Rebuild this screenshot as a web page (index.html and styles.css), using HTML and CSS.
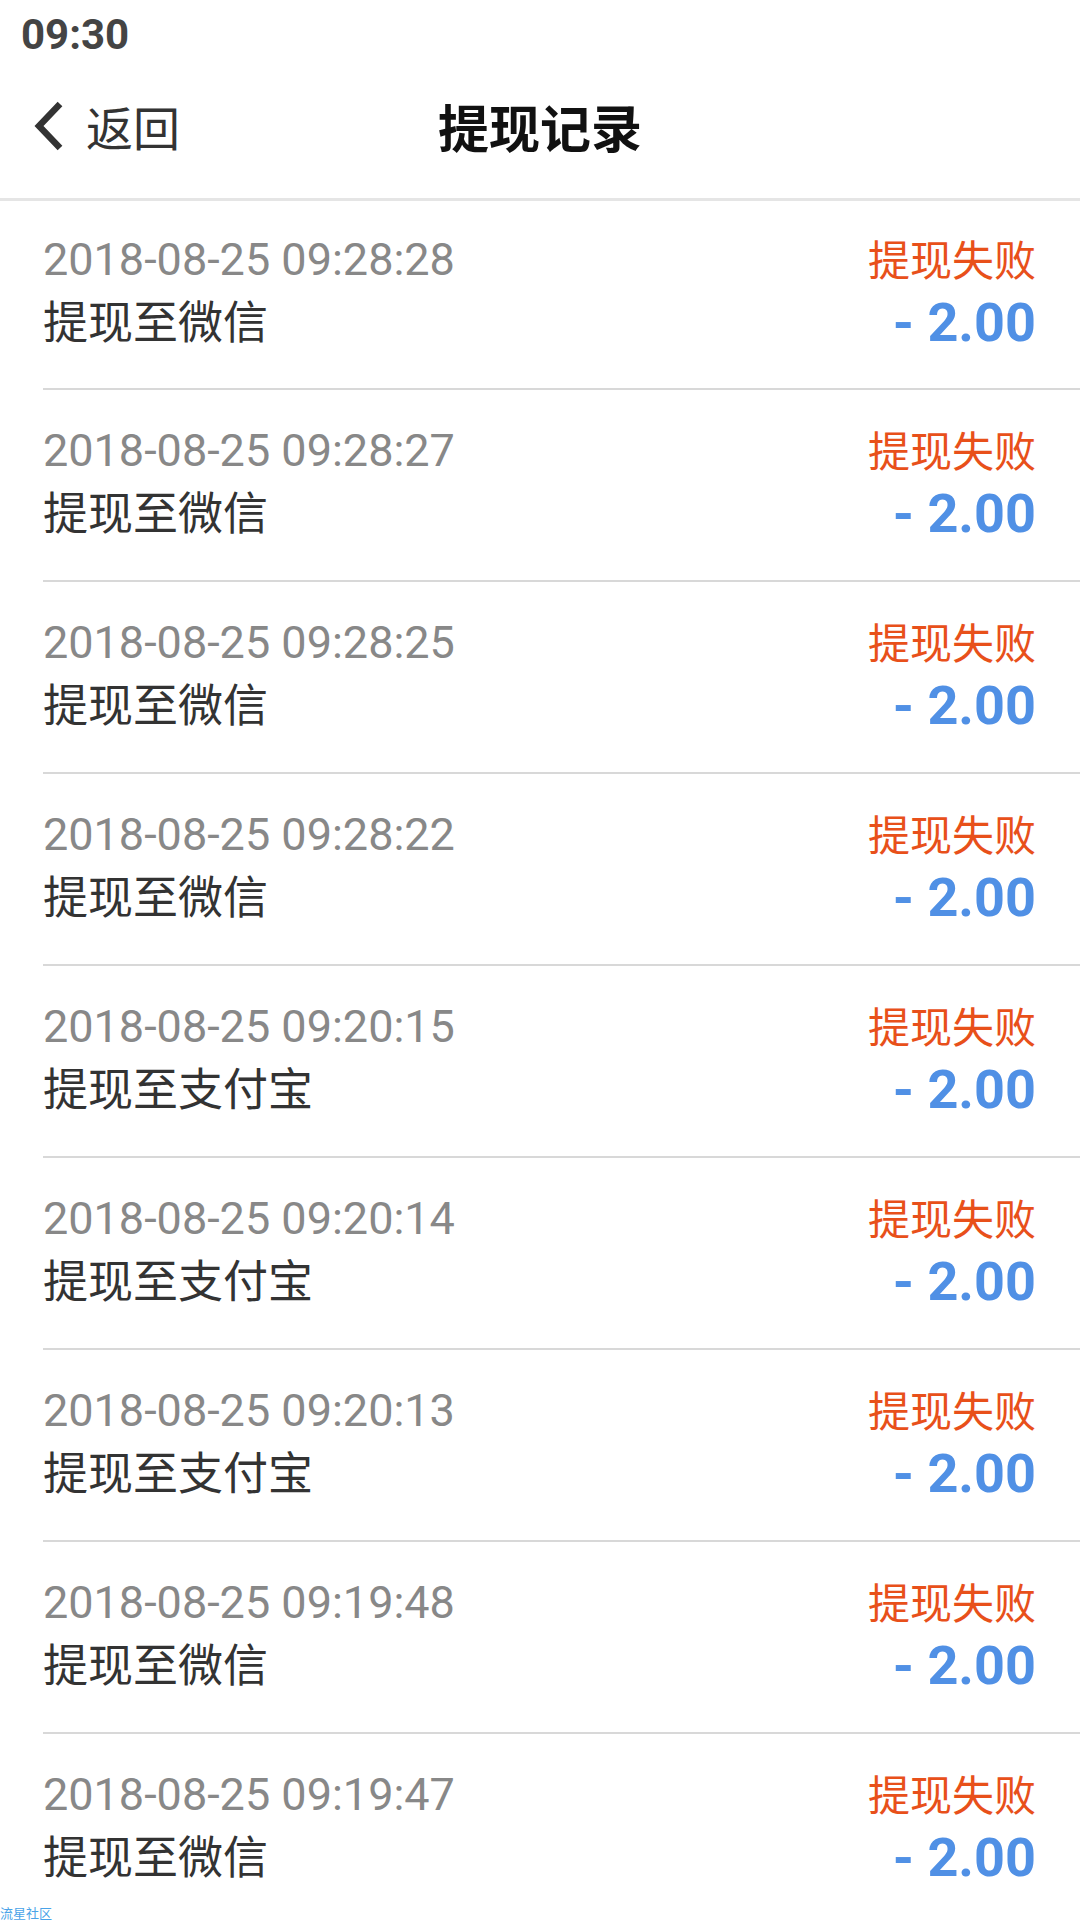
FILE: index.html
```html
<!DOCTYPE html>
<html>
<head>
<meta charset="utf-8">
<title>提现记录</title>
<link rel="stylesheet" href="styles.css">
</head>
<body>
<div class="statusbar">09:30</div>
<div class="navbar">
	<div class="back">
		<svg class="chev" width="32" height="50" viewBox="0 0 32 50"><polyline points="27,3 6,25 27,47" fill="none" stroke="#333" stroke-width="6.5"/></svg>
		<span>返回</span>
	</div>
	<div class="title">提现记录</div>
	<div></div>
</div>

<div class="list">
	<div class="row">
		<div class="left"><p class="date">2018-08-25 09:28:28</p><p class="name">提现至微信</p></div>
		<div class="right"><p class="state">提现失败</p><p class="amount">- 2.00</p></div>
	</div>
	<div class="row">
		<div class="left"><p class="date">2018-08-25 09:28:27</p><p class="name">提现至微信</p></div>
		<div class="right"><p class="state">提现失败</p><p class="amount">- 2.00</p></div>
	</div>
	<div class="row">
		<div class="left"><p class="date">2018-08-25 09:28:25</p><p class="name">提现至微信</p></div>
		<div class="right"><p class="state">提现失败</p><p class="amount">- 2.00</p></div>
	</div>
	<div class="row">
		<div class="left"><p class="date">2018-08-25 09:28:22</p><p class="name">提现至微信</p></div>
		<div class="right"><p class="state">提现失败</p><p class="amount">- 2.00</p></div>
	</div>
	<div class="row">
		<div class="left"><p class="date">2018-08-25 09:20:15</p><p class="name">提现至支付宝</p></div>
		<div class="right"><p class="state">提现失败</p><p class="amount">- 2.00</p></div>
	</div>
	<div class="row">
		<div class="left"><p class="date">2018-08-25 09:20:14</p><p class="name">提现至支付宝</p></div>
		<div class="right"><p class="state">提现失败</p><p class="amount">- 2.00</p></div>
	</div>
	<div class="row">
		<div class="left"><p class="date">2018-08-25 09:20:13</p><p class="name">提现至支付宝</p></div>
		<div class="right"><p class="state">提现失败</p><p class="amount">- 2.00</p></div>
	</div>
	<div class="row">
		<div class="left"><p class="date">2018-08-25 09:19:48</p><p class="name">提现至微信</p></div>
		<div class="right"><p class="state">提现失败</p><p class="amount">- 2.00</p></div>
	</div>
	<div class="row">
		<div class="left"><p class="date">2018-08-25 09:19:47</p><p class="name">提现至微信</p></div>
		<div class="right"><p class="state">提现失败</p><p class="amount">- 2.00</p></div>
	</div>
</div>
<div class="mark">流星社区</div>
</body>
</html>
```

FILE: styles.css
```css
body {
	margin: 0;
	background-color: #fff;
	font-family: Roboto, "Noto Sans CJK SC", sans-serif;
	color: #333;
	height: 1920px;
	overflow: hidden;
	position: relative;
}
p {
	margin: 0;
}
.statusbar {
	height: 66px;
	padding-left: 21px;
	font-size: 42px;
	font-weight: bold;
	color: #444;
	line-height: 70px;
}
.navbar {
	height: 135px;
	box-sizing: border-box;
	padding-bottom: 13px;
	display: grid;
	grid-template-columns: 1fr auto 1fr;
	align-items: center;
	border-bottom: 3px solid #e5e5e5;
}
.back {
	display: flex;
	align-items: center;
	padding-left: 33px;
	font-family: "Noto Sans CJK SC", sans-serif;
	font-size: 47px;
	color: #333;
}
.chev {
	margin-right: 21px;
}
.title {
	font-family: "Noto Sans CJK SC", sans-serif;
	font-size: 51px;
	font-weight: bold;
	color: #111;
}
.list {
	padding-left: 43px;
}
.row {
	display: flex;
	justify-content: space-between;
	height: 192px;
	box-sizing: border-box;
	padding: 29px 44px 0 0;
	border-bottom: 2px solid #d8d8d8;
}
.row:first-child {
	height: 189px;
	padding-top: 27px;
}
.left {
	padding-top: 2px;
}
.date {
	font-size: 45px;
	line-height: 60px;
	color: #888;
}
.name {
	font-family: "Noto Sans CJK SC", sans-serif;
	font-size: 45px;
	line-height: 60px;
	color: #333;
}
.right {
	text-align: right;
}
.state {
	font-family: "Noto Sans CJK SC", sans-serif;
	font-size: 42px;
	line-height: 60px;
	color: #e8501a;
}
.amount {
	font-size: 54px;
	font-weight: bold;
	line-height: 70px;
	color: #5090e5;
}
.mark {
	position: absolute;
	left: 0;
	bottom: 0;
	font-family: "Noto Sans CJK SC", sans-serif;
	font-size: 13px;
	line-height: 15px;
	color: #4aa3e8;
}
```
